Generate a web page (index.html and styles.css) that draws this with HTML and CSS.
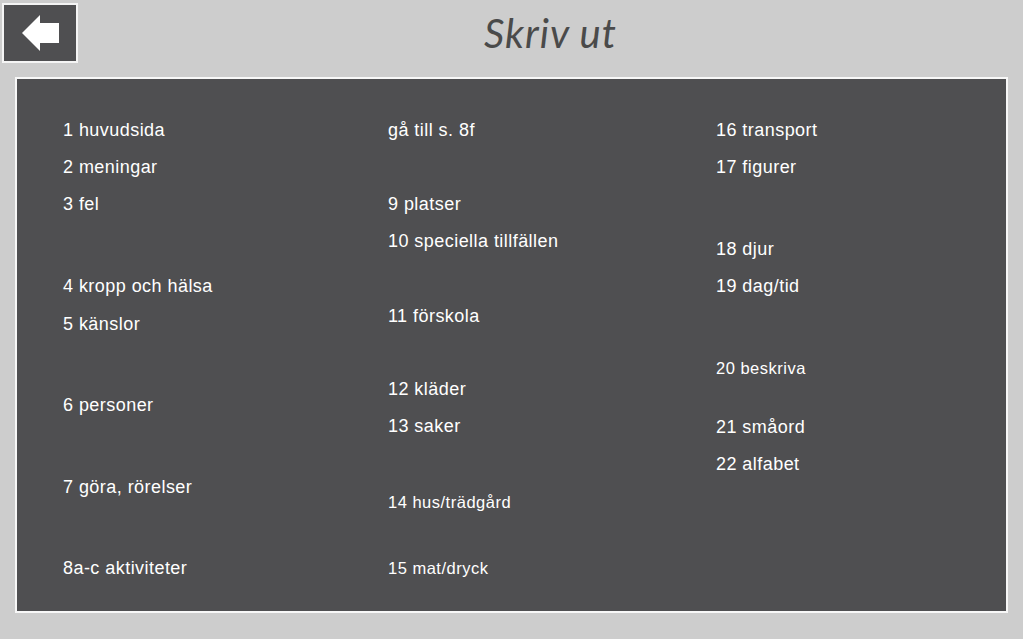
FILE: index.html
```html
<!DOCTYPE html>
<html lang="sv">
<head>
<meta charset="utf-8">
<title>Skriv ut</title>
<link rel="stylesheet" href="styles.css">
</head>
<body>
<header class="top">
  <button class="back" aria-label="Tillbaka">
    <svg width="72" height="56" viewBox="2 2 72 56" aria-hidden="true">
      <polygon points="20,30 38,12 38,20 57,20 57,40 38,40 38,48" fill="#ffffff"/>
    </svg>
  </button>
  <h1 class="title">Skriv ut</h1>
</header>
<main class="panel">
  <ul class="col">
    <li>1 huvudsida</li>
    <li>2 meningar</li>
    <li>3 fel</li>
    <li class="g45">4 kropp och hälsa</li>
    <li class="g1">5 känslor</li>
    <li class="g44">6 personer</li>
    <li class="g45">7 göra, rörelser</li>
    <li class="g44">8a-c aktiviteter</li>
  </ul>
  <ul class="col">
    <li>gå till s. 8f</li>
    <li class="g37">9 platser</li>
    <li>10 speciella tillfällen</li>
    <li class="g38">11 förskola</li>
    <li class="g36">12 kläder</li>
    <li>13 saker</li>
    <li class="g39 small">14 hus/trädgård</li>
    <li class="g29 small">15 mat/dryck</li>
  </ul>
  <ul class="col">
    <li>16 transport</li>
    <li>17 figurer</li>
    <li class="g45">18 djur</li>
    <li>19 dag/tid</li>
    <li class="g45 small">20 beskriva</li>
    <li class="g22">21 småord</li>
    <li>22 alfabet</li>
  </ul>
</main>
</body>
</html>
```

FILE: styles.css
```css
html, body {
  margin: 0;
  padding: 0;
}
body {
  background: #cdcdcd;
  width: 1023px;
  height: 639px;
  overflow: hidden;
  font-family: "Liberation Sans", Arial, sans-serif;
}
.top {
  display: flex;
  align-items: stretch;
  height: 60px;
  padding: 3px 0 0 2px;
}
.back {
  box-sizing: border-box;
  width: 76px;
  height: 60px;
  margin: 0;
  padding: 0;
  background: #4f4f51;
  border: 2px solid #f4f4f4;
  display: flex;
  align-items: center;
  justify-content: center;
  cursor: pointer;
}
.back svg {
  display: block;
}
.title {
  flex: 1;
  margin: 0;
  text-align: center;
  font-family: "Comic Sans MS", "Lato", cursive;
  font-style: italic;
  font-weight: 400;
  font-size: 40px;
  line-height: 60px;
  color: #4a4a4a;
  letter-spacing: 1px;
}
.panel {
  box-sizing: border-box;
  margin: 14px 0 0 15px;
  width: 993px;
  height: 536px;
  background: #4f4f51;
  border: 2px solid #f7f7f7;
  display: grid;
  grid-template-columns: 325px 328px 1fr;
  padding: 33px 0 0 46px;
}
.col {
  list-style: none;
  margin: 0;
  padding: 0;
  display: flex;
  flex-direction: column;
}
.col li {
  color: #ffffff;
  font-size: 18px;
  letter-spacing: 0.45px;
  line-height: 37px;
  height: 37px;
  white-space: nowrap;
}
.col li.small {
  font-size: 16.5px;
  letter-spacing: 0.5px;
}
.g1 { margin-top: 1px; }
.g22 { margin-top: 22px; }
.g29 { margin-top: 29px; }
.g36 { margin-top: 36px; }
.g37 { margin-top: 37px; }
.g38 { margin-top: 38px; }
.g39 { margin-top: 39px; }
.g44 { margin-top: 44px; }
.g45 { margin-top: 45px; }
```
